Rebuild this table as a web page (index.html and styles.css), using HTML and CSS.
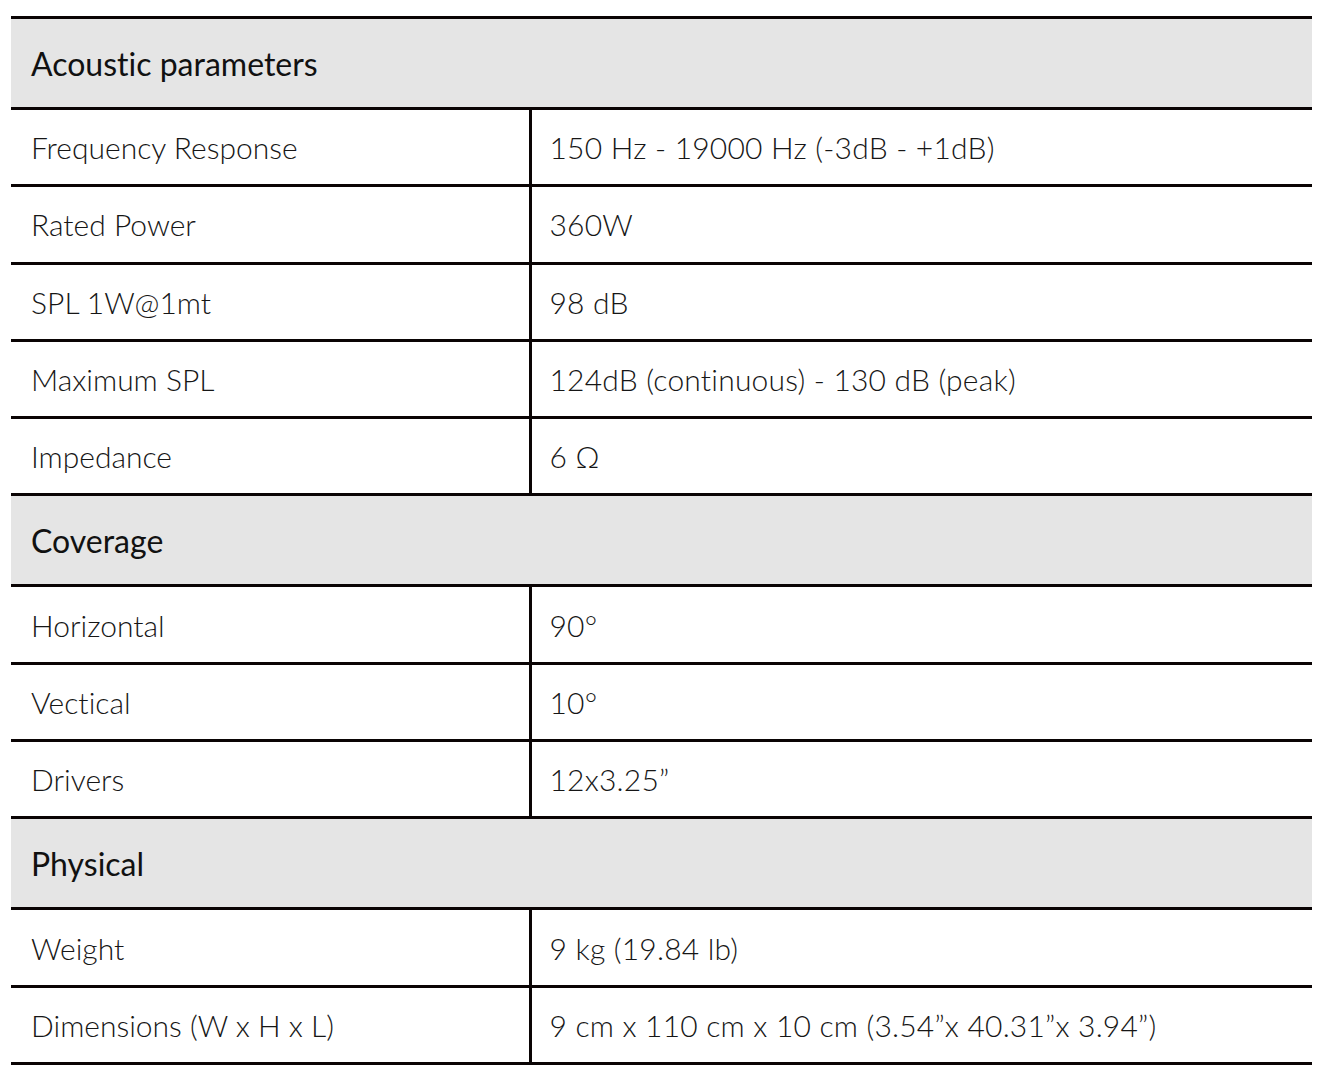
FILE: index.html
```html
<!DOCTYPE html>
<html lang="en">
<head>
<meta charset="utf-8">
<link rel="stylesheet" href="styles.css">
</head>
<body>
<table class="specs">
  <colgroup>
    <col class="col-label">
    <col class="col-value">
  </colgroup>
  <tbody>
    <tr class="section"><th colspan="2">Acoustic parameters</th></tr>
    <tr><td class="label">Frequency Response</td><td class="value">150 Hz - 19000 Hz (-3dB - +1dB)</td></tr>
    <tr><td class="label">Rated Power</td><td class="value">360W</td></tr>
    <tr><td class="label">SPL 1W@1mt</td><td class="value">98 dB</td></tr>
    <tr><td class="label">Maximum SPL</td><td class="value">124dB (continuous) - 130 dB (peak)</td></tr>
    <tr><td class="label">Impedance</td><td class="value">6 Ω</td></tr>
    <tr class="section"><th colspan="2">Coverage</th></tr>
    <tr><td class="label">Horizontal</td><td class="value">90°</td></tr>
    <tr><td class="label">Vectical</td><td class="value">10°</td></tr>
    <tr><td class="label">Drivers</td><td class="value">12x3.25”</td></tr>
    <tr class="section"><th colspan="2">Physical</th></tr>
    <tr><td class="label">Weight</td><td class="value">9 kg (19.84 lb)</td></tr>
    <tr><td class="label">Dimensions (W x H x L)</td><td class="value">9 cm x 110 cm x 10 cm (3.54”x 40.31”x 3.94”)</td></tr>
  </tbody>
</table>
</body>
</html>
```
FILE: styles.css
```css
html, body {
  margin: 0;
  padding: 0;
  background: #ffffff;
}
body {
  padding: 16px 17px 0 11px;
  font-family: Lato, "Open Sans", sans-serif;
  font-variant-ligatures: none;
}
.specs {
  width: 1301px;
  border-collapse: collapse;
  table-layout: fixed;
}
.col-label {
  width: 519px;
}
.specs th,
.specs td {
  border-top: 3px solid #0a0404;
  border-bottom: 3px solid #0a0404;
  text-align: left;
  padding: 0 0 0 20px;
  white-space: nowrap;
  vertical-align: middle;
}
.section th {
  height: 88px;
  background: #e5e5e5;
  font-size: 32px;
  font-weight: 400;
  color: #111111;
}
.specs td {
  height: 74.3px;
  font-size: 30px;
  font-weight: 300;
  color: #161616;
}
.label {
  border-right: 3px solid #0a0404;
}
.specs td.value {
  padding-left: 18px;
  letter-spacing: 0.2px;
}
```
